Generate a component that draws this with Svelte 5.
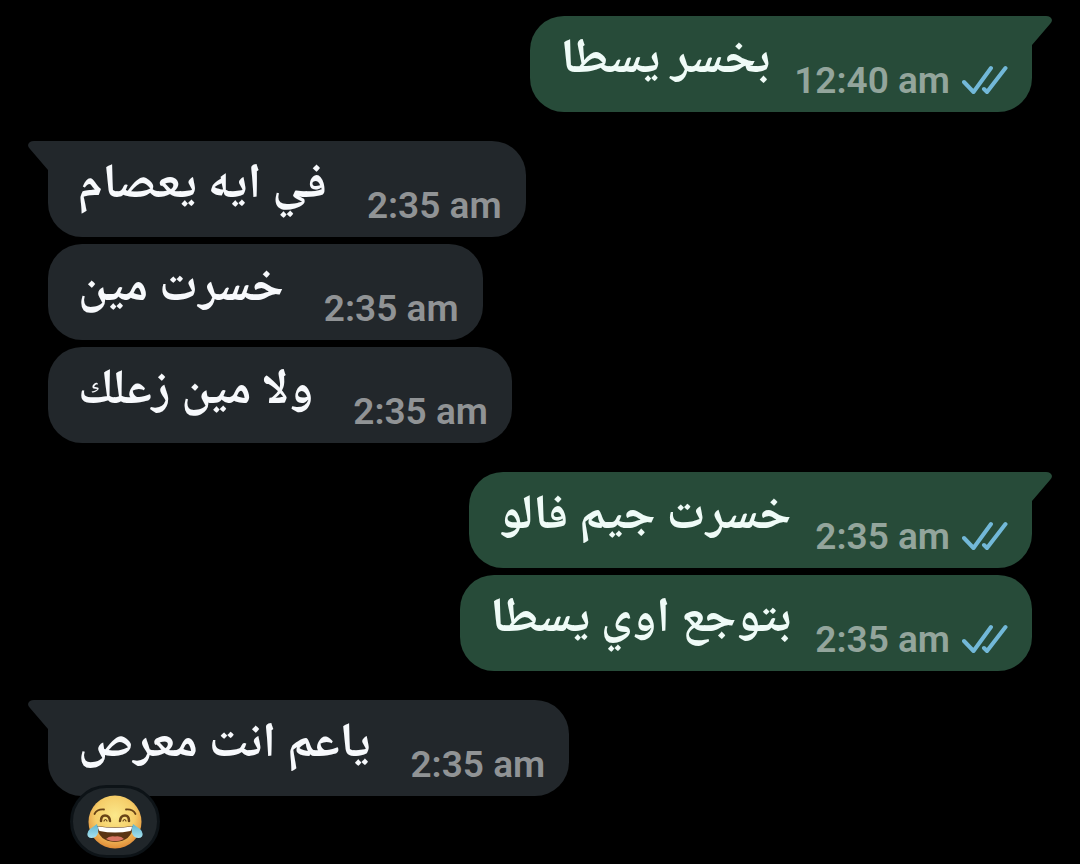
<script lang="ts">
	interface Message {
		text: string;
		time: string;
		reaction?: boolean;
	}

	interface Group {
		outgoing: boolean;
		messages: Message[];
	}

	const groups: Group[] = [
		{ outgoing: true, messages: [{ text: 'بخسر يسطا', time: '12:40 am' }] },
		{
			outgoing: false,
			messages: [
				{ text: 'في ايه يعصام', time: '2:35 am' },
				{ text: 'خسرت مين', time: '2:35 am' },
				{ text: 'ولا مين زعلك', time: '2:35 am' }
			]
		},
		{
			outgoing: true,
			messages: [
				{ text: 'خسرت جيم فالو', time: '2:35 am' },
				{ text: 'بتوجع اوي يسطا', time: '2:35 am' }
			]
		},
		{ outgoing: false, messages: [{ text: 'ياعم انت معرص', time: '2:35 am', reaction: true }] }
	];
</script>

<main class="chat">
	{#each groups as group}
		<section class="group" class:outgoing={group.outgoing}>
			{#each group.messages as message, i}
				<article class="bubble" class:first={i === 0}>
					{#if i === 0}
						<svg class="tail" viewBox="0 0 24 32" aria-hidden="true">
							<path d="M0 0H18Q23 0 24 4Q24 6 22 8L4 29V32H0Z" />
						</svg>
					{/if}
					<p class="text" dir="rtl" lang="ar">{message.text}</p>
					<div class="meta">
						<time>{message.time}</time>
						{#if group.outgoing}
							<svg class="ticks" viewBox="0 0 46 30" role="img" aria-label="Read">
								<path d="M2 17L11.500 27L29 3M22 24L25 27L43.500 3" />
							</svg>
						{/if}
					</div>
					{#if message.reaction}
						<button type="button" class="reaction" aria-label="Face with tears of joy">
							<svg viewBox="0 0 56 56" aria-hidden="true">
								<defs>
									<radialGradient id="skin" cx="50%" cy="38%" r="62%">
										<stop offset="0" stop-color="#fbe88b" />
										<stop offset="0.6" stop-color="#f5cd68" />
										<stop offset="1" stop-color="#e08c38" />
									</radialGradient>
									<linearGradient id="tear" x1="0" y1="0" x2="0" y2="1">
										<stop offset="0" stop-color="#5fb4cf" />
										<stop offset="1" stop-color="#a5e1ee" />
									</linearGradient>
								</defs>
								<circle cx="28" cy="28" r="26.500" fill="url(#skin)" />
								<g fill="none" stroke="#684317" stroke-linecap="round">
									<path d="M7.500 20Q10 15 17 15.500M48.500 20Q46 15 39 15.500" stroke-width="1.800" />
									<path d="M14 27Q14 21.500 18 21.500Q22.500 21.500 23 27M33 27Q33.500 21.500 38 21.500Q42 21.500 42 27" stroke-width="2.500" />
									<path d="M17 27Q18.500 24 20 27M36 27Q37.500 24 39 27" stroke-width="1.200" />
								</g>
								<path d="M10 32Q28 34.500 46 32Q45 47 28 48Q11 47 10 32Z" fill="#5a3413" />
								<path d="M11 32.500Q28 35 45 32.500Q45 36 43.500 37Q28 40 12.500 37Q11 36 11 32.500Z" fill="#fff" />
								<path d="M19 45Q22 41.500 28 42.500Q34 41.500 37 45Q28 49.500 19 45Z" fill="#d87562" />
								<path d="M10 30Q13 39 9 42.500Q4 45.500 1 42.500Q-1 38.500 3 35Q6 33 10 30ZM46 30Q43 39 47 42.500Q52 45.500 55 42.500Q57 38.500 53 35Q50 33 46 30Z" fill="url(#tear)" />
							</svg>
						</button>
					{/if}
				</article>
			{/each}
		</section>
	{/each}
</main>

<style>
	:global(body) {
		margin: 0;
		background: #000;
	}

	.chat {
		display: flex;
		flex-direction: column;
		gap: 29px;
		padding: 16px 48px 68px;
		font-family: Roboto, sans-serif;
	}

	.group {
		--bubble: #22272b;
		--text: #f7f9fc;
		--meta: #909395;
		display: flex;
		flex-direction: column;
		align-items: flex-start;
		gap: 7px;
	}

	.group.outgoing {
		--bubble: #274b39;
		--text: #effbf7;
		--meta: #93a59c;
		align-items: flex-end;
	}

	.bubble {
		position: relative;
		display: flex;
		align-items: flex-end;
		gap: 40px;
		padding: 10px 24px 0 30px;
		border-radius: 34px;
		background: var(--bubble);
	}

	.outgoing .bubble {
		gap: 24px;
	}

	.bubble.first {
		border-top-left-radius: 0;
	}

	.outgoing .bubble.first {
		border-radius: 34px 0 34px 34px;
	}

	.tail {
		position: absolute;
		top: 0;
		left: -20px;
		width: 24px;
		height: 32px;
		fill: var(--bubble);
		transform: scaleX(-1);
	}

	.outgoing .tail {
		right: -20px;
		left: auto;
		transform: none;
	}

	.text {
		margin: 0;
		padding-bottom: 14px;
		color: var(--text);
		font-family: 'Noto Naskh Arabic', 'DejaVu Sans', sans-serif;
		font-size: 49px;
		font-weight: 700;
		line-height: 72px;
		white-space: nowrap;
	}

	.meta {
		display: flex;
		align-items: center;
		gap: 12px;
		padding-bottom: 9px;
		color: var(--meta);
		font-size: 37px;
		font-weight: 600;
		line-height: 44px;
		white-space: nowrap;
	}

	.ticks {
		width: 46px;
		height: 30px;
		padding-bottom: 2px;
		fill: none;
		stroke: #72b8d8;
		stroke-width: 4;
		stroke-linecap: round;
		stroke-linejoin: round;
	}

	.reaction {
		position: absolute;
		top: 85px;
		left: 22px;
		display: grid;
		place-items: center;
		width: 90px;
		height: 73px;
		padding: 0;
		border: 3px solid #0d1317;
		border-radius: 37px;
		background: #20262a;
	}

	.reaction svg {
		width: 56px;
		height: 56px;
	}
</style>
